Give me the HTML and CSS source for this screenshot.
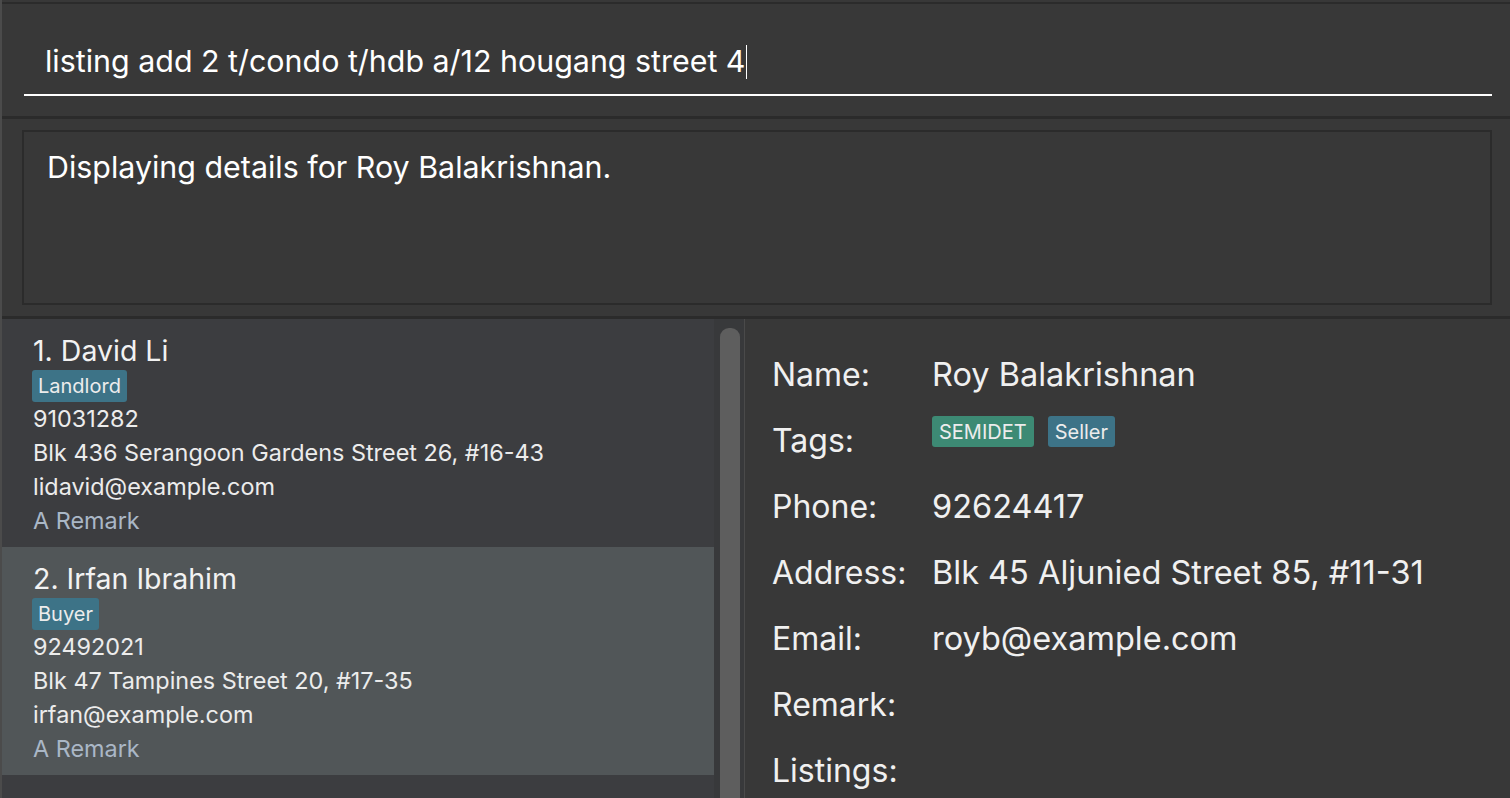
FILE: index.html
```html
<!DOCTYPE html>
<html>
<head>
<meta charset="utf-8">
<link rel="stylesheet" href="styles.css">
</head>
<body>
<div class="app">
  <section class="command">
    <div class="command-field">
      <span class="command-text">listing add 2 t/condo t/hdb a/12 hougang street 4</span><span class="caret"></span>
    </div>
  </section>
  <section class="result">
    <div class="result-box">Displaying details for Roy Balakrishnan.</div>
  </section>
  <section class="main">
    <div class="list-panel">
      <div class="list">
        <div class="card">
          <div class="card-name">1. David Li</div>
          <div class="tags"><span class="tag tag-blue">Landlord</span></div>
          <div class="card-line">91031282</div>
          <div class="card-line">Blk 436 Serangoon Gardens Street 26, #16-43</div>
          <div class="card-line">lidavid@example.com</div>
          <div class="card-line remark">A Remark</div>
        </div>
        <div class="card selected">
          <div class="card-name">2. Irfan Ibrahim</div>
          <div class="tags"><span class="tag tag-blue">Buyer</span></div>
          <div class="card-line">92492021</div>
          <div class="card-line">Blk 47 Tampines Street 20, #17-35</div>
          <div class="card-line">irfan@example.com</div>
          <div class="card-line remark">A Remark</div>
        </div>
      </div>
      <div class="scrollbar"><div class="thumb"></div></div>
    </div>
    <div class="detail">
      <div class="row"><div class="label">Name:</div><div class="value">Roy Balakrishnan</div></div>
      <div class="row"><div class="label">Tags:</div><div class="value detail-tags"><span class="tag tag-green">SEMIDET</span><span class="tag tag-blue">Seller</span></div></div>
      <div class="row"><div class="label">Phone:</div><div class="value">92624417</div></div>
      <div class="row"><div class="label">Address:</div><div class="value">Blk 45 Aljunied Street 85, #11-31</div></div>
      <div class="row"><div class="label">Email:</div><div class="value">royb@example.com</div></div>
      <div class="row"><div class="label">Remark:</div><div class="value"></div></div>
      <div class="row"><div class="label">Listings:</div><div class="value"></div></div>
    </div>
  </section>
</div>
</body>
</html>
```

FILE: styles.css
```css
html, body {
  margin: 0;
  padding: 0;
  width: 1510px;
  height: 798px;
  overflow: hidden;
  background: #383838;
  font-family: Inter, "Noto Sans", sans-serif;
  color: #f2f2f2;
}

.app {
  box-sizing: border-box;
  width: 1510px;
  height: 798px;
  border-left: 2px solid #4b4b4b;
  display: flex;
  flex-direction: column;
  padding-top: 2px;
}

.command {
  border-top: 2px solid #2b2b2b;
  height: 114px;
  flex: none;
  box-sizing: border-box;
  padding: 0 18px 0 22px;
  background: #383838;
}

.command-field {
  margin-top: 34px;
  height: 58px;
  box-sizing: border-box;
  border-bottom: 2px solid #ffffff;
  padding-left: 21px;
  display: flex;
  align-items: flex-start;
}

.command-text {
  font-size: 30.4px;
  line-height: 46px;
  color: #ffffff;
  white-space: pre;
}

.caret {
  width: 1px;
  height: 34px;
  margin-top: 7px;
  background: #ffffff;
}

.result {
  border-top: 3px solid #2b2b2b;
  border-bottom: 3px solid #2b2b2b;
  height: 203px;
  flex: none;
  box-sizing: border-box;
  padding: 11px 18px 11px 20px;
}

.result-box {
  box-sizing: border-box;
  height: 175px;
  border: 2px solid #2b2b2b;
  padding: 13px 23px;
  font-size: 30.4px;
  line-height: 44px;
  color: #ffffff;
}

.main {
  flex: 1;
  display: flex;
  min-height: 0;
}

.list-panel {
  width: 742px;
  display: flex;
  background: #3a3a3c;
  border-right: 1px solid #4a4a4a;
}

.list {
  width: 712px;
  background: #3c3d40;
}

.card {
  box-sizing: border-box;
  height: 228px;
  padding: 15px 0 0 31px;
}

.card.selected {
  background: #515658;
}

.card-name {
  font-size: 28.5px;
  line-height: 34px;
  color: #f2f2f2;
}

.tags {
  display: flex;
  margin-top: 2px;
  margin-left: -1px;
  height: 32px;
}

.tag {
  display: inline-flex;
  align-items: center;
  height: 32px;
  box-sizing: border-box;
  padding: 0 6px;
  border-radius: 3px;
  font-size: 20px;
  color: #ececec;
}

.tag-blue {
  background: #3d7387;
}

.tag-green {
  background: #3d8a74;
}

.card-line {
  font-size: 23.4px;
  line-height: 34px;
  color: #ececec;
}

.card-line.remark {
  color: #aab7c6;
}

.scrollbar {
  flex: 1;
  padding: 9px 4px 0 6px;
  background: #38393b;
}

.thumb {
  height: 480px;
  border-radius: 9px;
  background: #5e5e5e;
}

.detail {
  flex: 1;
  padding: 22px 0 0 27px;
  background: #383838;
}

.row {
  display: flex;
  height: 66px;
  align-items: center;
}

.label {
  width: 160px;
  font-size: 32px;
  color: #f0f0f0;
}

.value {
  font-size: 32.5px;
  color: #f0f0f0;
}

.detail-tags {
  display: flex;
  gap: 14px;
  align-self: flex-start;
  margin-top: 9px;
}

.detail-tags .tag {
  height: 31px;
  padding: 0 7px;
}
```
